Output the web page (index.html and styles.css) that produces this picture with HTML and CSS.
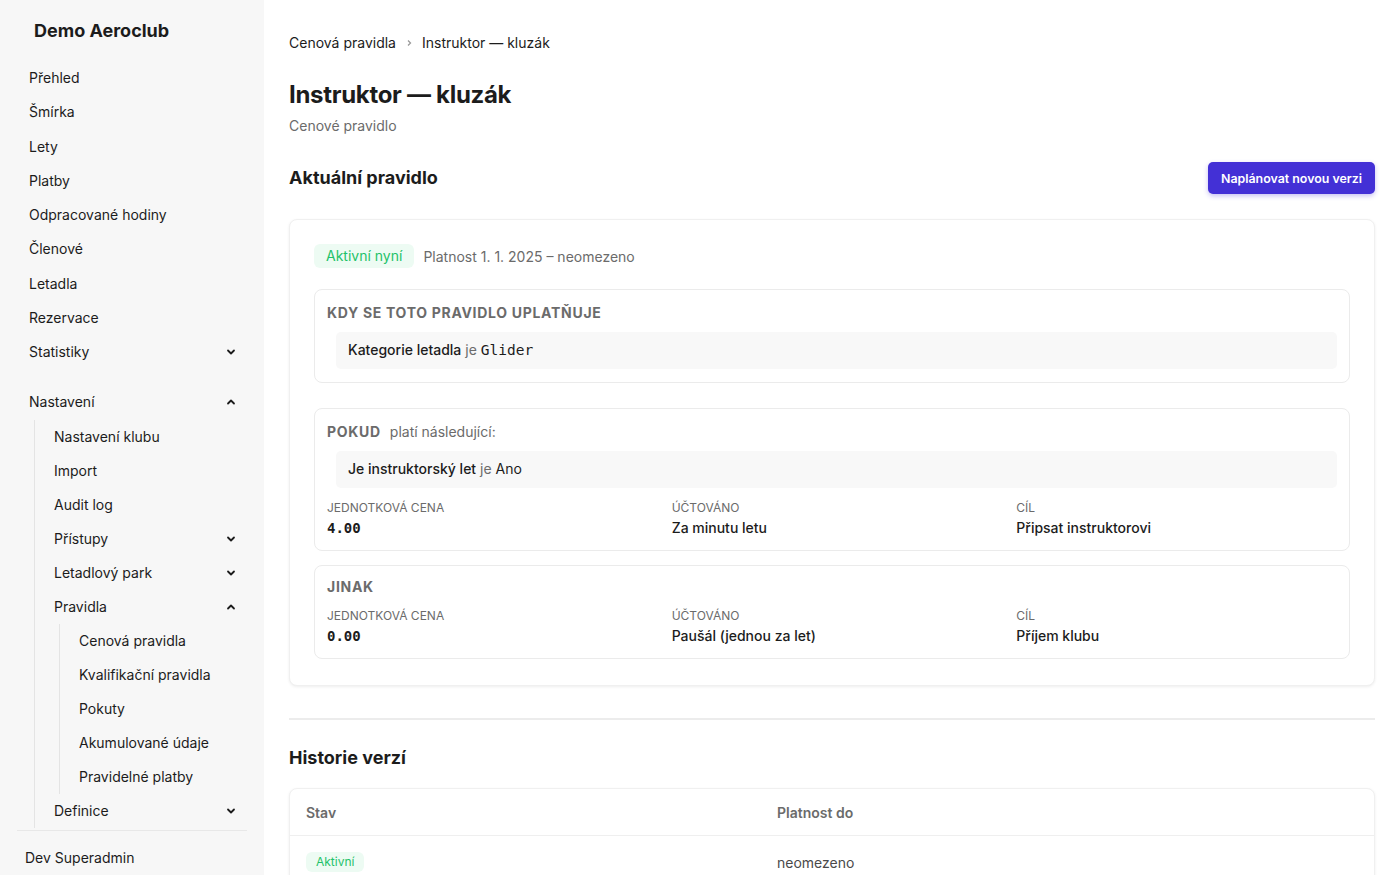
FILE: index.html
```html
<!DOCTYPE html>
<html lang="cs">
<head>
    <meta charset="UTF-8">
    <meta name="viewport" content="width=device-width, initial-scale=1.0">
    <title>Instruktor — kluzák</title>
    <link rel="stylesheet" href="styles.css">
</head>
<body>
    <div class="layout">
        <aside class="sidebar">
            <div class="brand">Demo Aeroclub</div>
            <nav class="nav">
                <a class="nav-item" href="#">Přehled</a>
                <a class="nav-item" href="#">Šmírka</a>
                <a class="nav-item" href="#">Lety</a>
                <a class="nav-item" href="#">Platby</a>
                <a class="nav-item" href="#">Odpracované hodiny</a>
                <a class="nav-item" href="#">Členové</a>
                <a class="nav-item" href="#">Letadla</a>
                <a class="nav-item" href="#">Rezervace</a>
                <a class="nav-item" href="#">Statistiky
                    <svg class="chev" viewBox="0 0 10 10"><path d="M2 3.5 5 6.5 8 3.5"/></svg>
                </a>

                <div class="nav-group">
                    <a class="nav-item" href="#">Nastavení
                        <svg class="chev" viewBox="0 0 10 10"><path d="M2 6.5 5 3.5 8 6.5"/></svg>
                    </a>
                    <div class="sub-nav">
                        <a class="nav-item" href="#">Nastavení klubu</a>
                        <a class="nav-item" href="#">Import</a>
                        <a class="nav-item" href="#">Audit log</a>
                        <a class="nav-item" href="#">Přístupy
                            <svg class="chev" viewBox="0 0 10 10"><path d="M2 3.5 5 6.5 8 3.5"/></svg>
                        </a>
                        <a class="nav-item" href="#">Letadlový park
                            <svg class="chev" viewBox="0 0 10 10"><path d="M2 3.5 5 6.5 8 3.5"/></svg>
                        </a>
                        <a class="nav-item" href="#">Pravidla
                            <svg class="chev" viewBox="0 0 10 10"><path d="M2 6.5 5 3.5 8 6.5"/></svg>
                        </a>
                        <div class="sub-nav sub-nav-inner">
                            <a class="nav-item" href="#">Cenová pravidla</a>
                            <a class="nav-item" href="#">Kvalifikační pravidla</a>
                            <a class="nav-item" href="#">Pokuty</a>
                            <a class="nav-item" href="#">Akumulované údaje</a>
                            <a class="nav-item" href="#">Pravidelné platby</a>
                        </div>
                        <a class="nav-item" href="#">Definice
                            <svg class="chev" viewBox="0 0 10 10"><path d="M2 3.5 5 6.5 8 3.5"/></svg>
                        </a>
                    </div>
                </div>
            </nav>
            <div class="sidebar-footer">Dev Superadmin</div>
        </aside>

        <main class="main">
            <div class="breadcrumb">
                <a href="#">Cenová pravidla</a>
                <svg class="crumb-sep" viewBox="0 0 10 10"><path d="M4 2.5 6.5 5 4 7.5"/></svg>
                <span>Instruktor — kluzák</span>
            </div>

            <h1>Instruktor — kluzák</h1>
            <div class="subtitle">Cenové pravidlo</div>

            <div class="section-head">
                <h2>Aktuální pravidlo</h2>
                <button type="button" class="btn-primary">Naplánovat novou verzi</button>
            </div>

            <div class="card rule-card">
                <div class="validity">
                    <span class="badge">Aktivní nyní</span>
                    <span class="muted">Platnost 1. 1. 2025 – neomezeno</span>
                </div>

                <div class="box">
                    <div class="box-title">KDY SE TOTO PRAVIDLO UPLATŇUJE</div>
                    <div class="cond">
                        <strong>Kategorie letadla</strong> <span class="muted">je</span> <code>Glider</code>
                    </div>
                </div>

                <div class="box box-if">
                    <div class="box-title">POKUD <span class="box-note">platí následující:</span></div>
                    <div class="cond">
                        <strong>Je instruktorský let</strong> <span class="muted">je</span> <span>Ano</span>
                    </div>
                    <div class="facts">
                        <div>
                            <div class="fact-label">JEDNOTKOVÁ CENA</div>
                            <div class="fact-value mono">4.00</div>
                        </div>
                        <div>
                            <div class="fact-label">ÚČTOVÁNO</div>
                            <div class="fact-value">Za minutu letu</div>
                        </div>
                        <div>
                            <div class="fact-label">CÍL</div>
                            <div class="fact-value">Připsat instruktorovi</div>
                        </div>
                    </div>
                </div>

                <div class="box box-else">
                    <div class="box-title">JINAK</div>
                    <div class="facts">
                        <div>
                            <div class="fact-label">JEDNOTKOVÁ CENA</div>
                            <div class="fact-value mono">0.00</div>
                        </div>
                        <div>
                            <div class="fact-label">ÚČTOVÁNO</div>
                            <div class="fact-value">Paušál (jednou za let)</div>
                        </div>
                        <div>
                            <div class="fact-label">CÍL</div>
                            <div class="fact-value">Příjem klubu</div>
                        </div>
                    </div>
                </div>
            </div>

            <hr class="divider">

            <h2 class="history-title">Historie verzí</h2>

            <div class="card history">
                <div class="history-row history-head">
                    <div>Stav</div>
                    <div>Platnost do</div>
                </div>
                <div class="history-row">
                    <div><span class="badge badge-sm">Aktivní</span></div>
                    <div class="history-cell">neomezeno</div>
                </div>
            </div>
        </main>
    </div>
</body>
</html>
```

FILE: styles.css
```css
* {
    box-sizing: border-box;
}
body {
    margin: 0;
    font-family: Inter, 'Noto Sans', sans-serif;
    font-size: 14px;
    color: #1c1c1c;
    background: #fff;
}
a {
    color: inherit;
    text-decoration: none;
}
.layout {
    display: flex;
    min-height: 100vh;
}

/* sidebar */
.sidebar {
    width: 264px;
    flex-shrink: 0;
    background-color: #f7f7f7;
    padding: 19px 16px 0;
}
.brand {
    font-size: 18px;
    font-weight: 700;
    line-height: 24px;
    padding-left: 18px;
    margin-bottom: 18px;
}
.nav {
    display: flex;
    flex-direction: column;
}
.nav-item {
    display: flex;
    align-items: center;
    justify-content: space-between;
    height: 34.25px;
    padding: 0 12px 0 13px;
    line-height: 20px;
}
.chev {
    width: 10px;
    height: 10px;
    fill: none;
    stroke: #1c1c1c;
    stroke-width: 1.8;
    stroke-linecap: round;
    stroke-linejoin: round;
}
.nav-group {
    margin-top: 16px;
}
.sub-nav {
    display: flex;
    flex-direction: column;
    margin-left: 18px;
    border-left: 1px solid #e4e4e4;
}
.sub-nav .nav-item {
    height: 34px;
    padding-left: 19px;
}
.sub-nav-inner {
    margin-left: 24px;
}
.sidebar-footer {
    border-top: 1px solid #e8e8e8;
    margin: 2px 1px 0;
    padding: 17px 8px;
    line-height: 20px;
}

/* main */
.main {
    flex: 1;
    padding: 33px 25px 0;
}
.breadcrumb {
    display: flex;
    align-items: center;
    gap: 8px;
    line-height: 20px;
}
.crumb-sep {
    width: 10px;
    height: 10px;
    fill: none;
    stroke: #9a9a9a;
    stroke-width: 1.3;
}
h1 {
    font-size: 24px;
    line-height: 32px;
    font-weight: 700;
    letter-spacing: -0.3px;
    margin: 26px 0 5px;
}
.subtitle {
    color: #6b6b6b;
    line-height: 20px;
}
h2 {
    font-size: 18px;
    line-height: 28px;
    font-weight: 700;
    margin: 0;
}
.section-head {
    display: flex;
    align-items: center;
    justify-content: space-between;
    margin: 26px 0 25px;
}
.btn-primary {
    font-family: inherit;
    font-size: 12.4px;
    font-weight: 600;
    color: #fff;
    background-color: #4330d6;
    border: none;
    border-radius: 5px;
    height: 32px;
    padding: 0 13px;
    box-shadow: 0 2px 5px rgba(67, 48, 214, 0.3);
    cursor: pointer;
}
.card {
    background: #fff;
    border: 1px solid #f0f0f0;
    border-radius: 8px;
    box-shadow: 0 1px 3px rgba(0, 0, 0, 0.07);
}
.rule-card {
    padding: 24px 24px 26px;
}
.validity {
    display: flex;
    align-items: center;
    gap: 9px;
}
.badge {
    display: inline-flex;
    align-items: center;
    height: 24px;
    padding: 0 12px;
    border-radius: 6px;
    background-color: #edfbf3;
    color: #1fc26a;
    line-height: 20px;
}
.badge-sm {
    height: 20px;
    padding: 0 10px;
    font-size: 12px;
}
.muted {
    color: #6b6b6b;
}
.box {
    border: 1px solid #ebebeb;
    border-radius: 8px;
    padding: 13px 12px 12px;
    margin-top: 21px;
}
.box-if {
    margin-top: 25px;
}
.box-else {
    margin-top: 14px;
    padding-top: 11px;
}
.box-else .facts {
    margin-top: 11px;
}
.box-title {
    font-weight: 700;
    color: #6b6b6b;
    letter-spacing: 0.7px;
    line-height: 20px;
}
.box-note {
    font-weight: 400;
    letter-spacing: 0;
    margin-left: 5px;
}
.cond {
    background-color: #f8f8f8;
    border-radius: 5px;
    margin: 9px 0 0 9px;
    padding: 8px 12px 9px;
    line-height: 20px;
}
.box > .cond:last-child {
    margin-bottom: 1px;
}
.cond strong {
    font-weight: 500;
}
code, .mono {
    font-family: 'DejaVu Sans Mono', 'Liberation Mono', monospace;
}
code {
    font-size: 14.5px;
}
.facts {
    display: grid;
    grid-template-columns: repeat(3, 1fr);
    gap: 24px;
    margin-top: 12px;
}
.fact-label {
    font-size: 12px;
    line-height: 16px;
    color: #6b6b6b;
    margin-bottom: 2px;
}
.fact-value {
    font-weight: 500;
    line-height: 20px;
}
.fact-value.mono {
    font-weight: 700;
    font-size: 14px;
}
.divider {
    border: none;
    border-top: 2px solid #ececec;
    margin: 32px 0 24px;
}
.history-title {
    margin-bottom: 16px;
}
.history-row {
    display: grid;
    grid-template-columns: 471px 1fr;
    align-items: center;
    padding: 0 16px;
}
.history-head {
    height: 47px;
    border-bottom: 1px solid #efefef;
    color: #6b6b6b;
    font-weight: 600;
}
.history-row:not(.history-head) {
    height: 52px;
}
.history-cell {
    color: #4a4a4a;
}
```
